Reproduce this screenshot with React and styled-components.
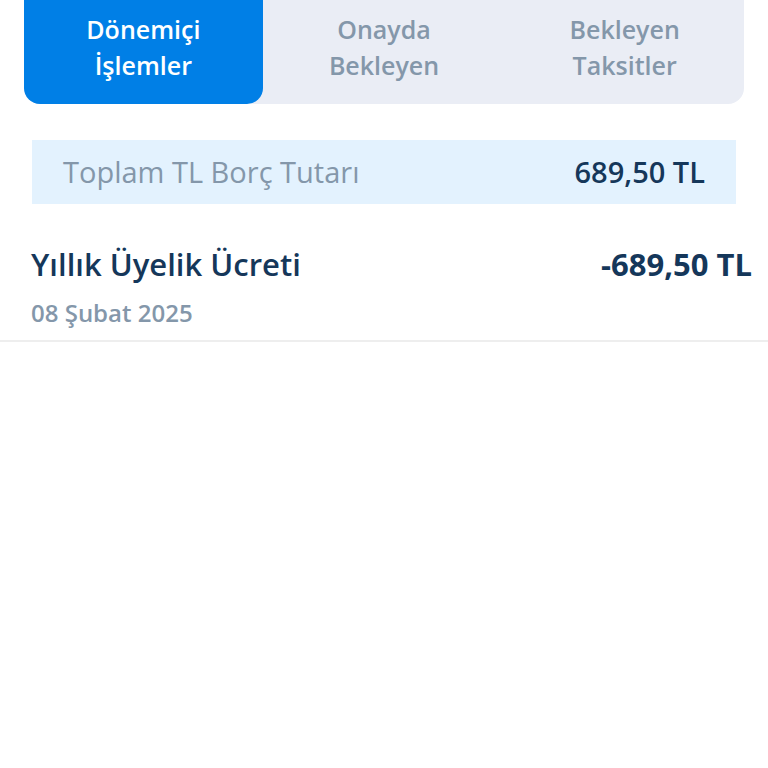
import { useState } from "react";
import styled, { createGlobalStyle } from "styled-components";

const abas = [
    { id: 'donemici', nome: ['Dönemiçi', 'İşlemler'] },
    { id: 'onayda', nome: ['Onayda', 'Bekleyen'] },
    { id: 'taksitler', nome: ['Bekleyen', 'Taksitler'] },
];

const islemler = [
    { id: 1, baslik: 'Yıllık Üyelik Ücreti', tarih: '08 Şubat 2025', tutar: '-689,50 TL' },
];

function Aba({ aba, ativa, selecionar }) {
    return (
        <BotaoAba
            type="button"
            role="tab"
            aria-selected={ativa}
            $ativa={ativa}
            onClick={() => selecionar(aba.id)}
        >
            {aba.nome[0]}
            <br />
            {aba.nome[1]}
        </BotaoAba>
    );
}

function Islem({ islem }) {
    return (
        <Item>
            <div>
                <Baslik>{islem.baslik}</Baslik>
                <Tarih>{islem.tarih}</Tarih>
            </div>
            <Tutar>{islem.tutar}</Tutar>
        </Item>
    );
}

export default function App() {
    const [abaAtiva, setAbaAtiva] = useState('donemici');

    return (
        <>
            <GlobalStyle />
            <Abas role="tablist">
                {abas.map((value) => (
                    <Aba
                        key={value.id}
                        aba={value}
                        ativa={value.id === abaAtiva}
                        selecionar={setAbaAtiva}
                    />
                ))}
            </Abas>
            <Toplam>
                <span>Toplam TL Borç Tutarı</span>
                <ToplamTutar>689,50 TL</ToplamTutar>
            </Toplam>
            <Lista>
                {islemler.map((value) => (
                    <Islem key={value.id} islem={value} />
                ))}
            </Lista>
        </>
    );
}

const GlobalStyle = createGlobalStyle`
    * {
        box-sizing: border-box;
    }
    body {
        margin: 0;
        background-color: #ffffff;
        color: #15375a;
        font-family: 'Open Sans', 'Noto Sans', sans-serif;
    }
`;
const Abas = styled.div`
    display: flex;
    gap: 2px;
    margin: 0 24px;
    border-radius: 0 0 16px 16px;
    background-color: #eaedf5;
`;
const BotaoAba = styled.button`
    flex: 1;
    padding: 11px 0 21px;
    border: none;
    border-radius: 0 0 16px 16px;
    background-color: ${(props) => (props.$ativa ? '#007fe6' : 'transparent')};
    color: ${(props) => (props.$ativa ? '#ffffff' : '#8497aa')};
    font-family: inherit;
    font-size: 25px;
    font-weight: 600;
    line-height: 36px;
    cursor: pointer;
`;
const Toplam = styled.div`
    display: flex;
    justify-content: space-between;
    align-items: center;
    margin: 36px 32px 0;
    padding: 12px 31px;
    background-color: #e3f2fe;
    color: #8497aa;
    font-size: 29px;
    line-height: 40px;
`;
const ToplamTutar = styled.span`
    color: #15375a;
    font-weight: 600;
`;
const Lista = styled.ul`
    margin: 36px 0 0;
    padding: 0;
    list-style: none;
`;
const Item = styled.li`
    display: flex;
    justify-content: space-between;
    align-items: flex-start;
    padding: 2px 16px 11px 31px;
    border-bottom: 2px solid #eeeeee;
`;
const Baslik = styled.div`
    font-size: 31px;
    font-weight: 600;
    line-height: 44px;
`;
const Tarih = styled.div`
    margin-top: 11px;
    color: #8497aa;
    font-size: 24px;
    font-weight: 600;
    line-height: 32px;
`;
const Tutar = styled.div`
    font-size: 31px;
    font-weight: 700;
    line-height: 44px;
`;
